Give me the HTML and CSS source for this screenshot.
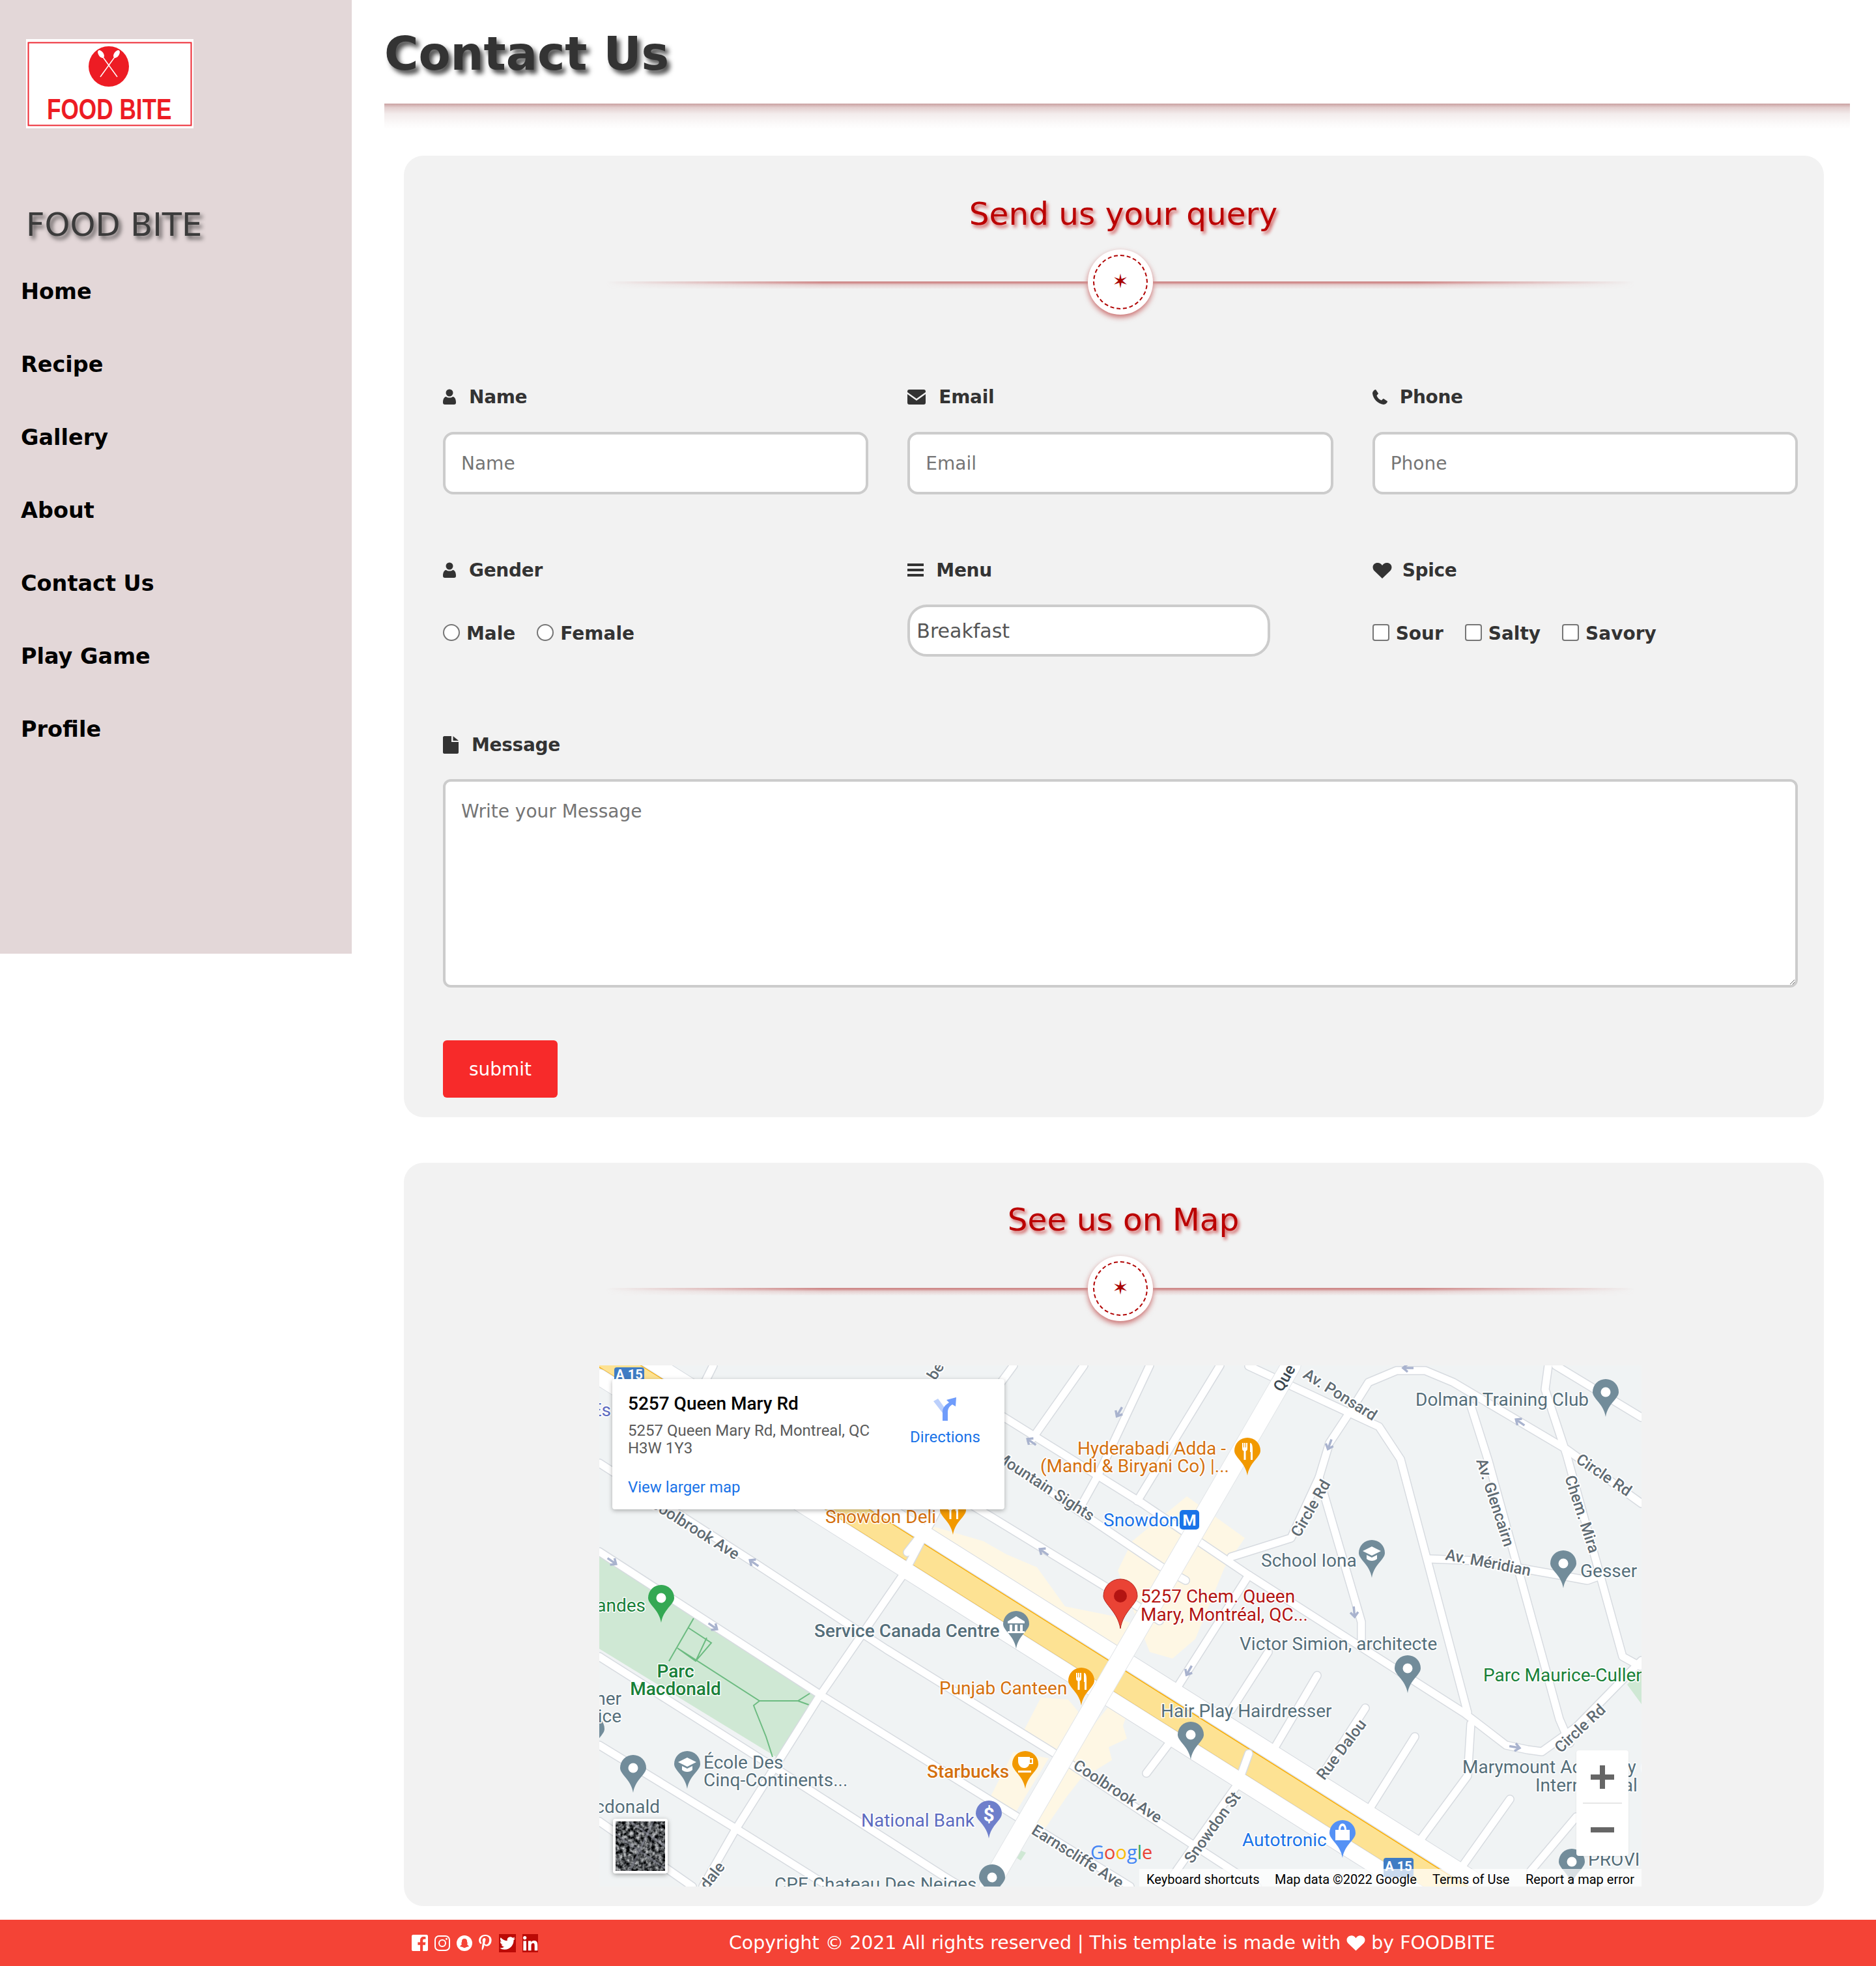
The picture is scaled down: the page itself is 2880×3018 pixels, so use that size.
FILE: index.html
```html
<!DOCTYPE html>
<html lang="en">
<head>
    <meta charset="UTF-8">
    <title>Contact Us</title>
    <link rel="stylesheet" href="styles.css">
</head>
<body>
    <div class="page">
        <aside class="sidebar">
            <div class="logo">
                <svg viewBox="0 0 257 137" width="257" height="137">
                    <rect x="3.500" y="5.500" width="250" height="127" fill="#fff" stroke="#ed2a35" stroke-width="2"/>
                    <circle cx="127" cy="42" r="31" fill="#ed1c24"/>
                    <g stroke="#fff" stroke-width="1.500" fill="#fff">
                        <path d="M114 58 L138 25"/>
                        <path d="M140 58 L116 25"/>
                        <ellipse cx="115" cy="23" rx="3" ry="6" transform="rotate(-35 115 23)"/>
                        <ellipse cx="139" cy="23" rx="3" ry="6" transform="rotate(35 139 23)"/>
                    </g>
                    <text class="logo-text" transform="translate(32 123) scale(0.8 1)">FOOD BITE</text>
                </svg>
            </div>
            <h2 class="brand">FOOD BITE</h2>
            <nav class="nav">
                <a href="#">Home</a>
                <a href="#">Recipe</a>
                <a href="#">Gallery</a>
                <a href="#">About</a>
                <a href="#">Contact Us</a>
                <a href="#">Play Game</a>
                <a href="#">Profile</a>
            </nav>
        </aside>

        <main class="content">
            <h1 class="page-title">Contact Us</h1>
            <div class="title-rule"></div>

            <section class="card card-form">
                <h2 class="card-title">Send us your query</h2>
                <div class="divider">
                    <span class="divider-line"></span>
                    <span class="divider-badge"><span class="divider-ring">&#10038;</span></span>
                    <span class="divider-line divider-line-right"></span>
                </div>

                <form class="query-form">
                    <div class="form-grid">
                        <div class="field">
                            <label class="field-label">
                                <svg class="icon icon-user" viewBox="0 0 20 24"><circle cx="10" cy="6" r="5.500"/><path d="M0 21 C0 14 3 12 5 12 C7 14 13 14 15 12 C17 12 20 14 20 21 C20 23 19 24 17 24 H3 C1 24 0 23 0 21Z"/></svg>
                                Name
                            </label>
                            <input type="text" placeholder="Name">
                        </div>
                        <div class="field">
                            <label class="field-label">
                                <svg class="icon icon-mail" viewBox="0 0 28 23"><path d="M3 0 H25 C27 0 28 1 28 3 V4 L14 14 L0 4 V3 C0 1 1 0 3 0Z"/><path d="M0 7 L14 17 L28 7 V20 C28 22 27 23 25 23 H3 C1 23 0 22 0 20Z"/></svg>
                                Email
                            </label>
                            <input type="text" placeholder="Email">
                        </div>
                        <div class="field">
                            <label class="field-label">
                                <svg class="icon icon-phone" viewBox="0 0 23 23"><path d="M5 0 L9 6 C9 7 7 8 6.500 9.500 C8 13 10 15 13.500 16.500 C15 16 16 14 17 14 L23 18 C23 20 20 23 17 23 C8 22 1 14 0 6 C0 3 3 0 5 0Z"/></svg>
                                Phone
                            </label>
                            <input type="text" placeholder="Phone">
                        </div>

                        <div class="field field-second">
                            <label class="field-label">
                                <svg class="icon icon-user" viewBox="0 0 20 24"><circle cx="10" cy="6" r="5.500"/><path d="M0 21 C0 14 3 12 5 12 C7 14 13 14 15 12 C17 12 20 14 20 21 C20 23 19 24 17 24 H3 C1 24 0 23 0 21Z"/></svg>
                                Gender
                            </label>
                            <div class="choices">
                                <label class="choice"><input type="radio" name="gender">Male</label>
                                <label class="choice"><input type="radio" name="gender">Female</label>
                            </div>
                        </div>
                        <div class="field field-second">
                            <label class="field-label">
                                <svg class="icon icon-bars" viewBox="0 0 25 20"><rect y="0" width="25" height="4"/><rect y="8" width="25" height="4"/><rect y="16" width="25" height="4"/></svg>
                                Menu
                            </label>
                            <select class="menu-select">
                                <option>Breakfast</option>
                                <option>Lunch</option>
                                <option>Dinner</option>
                            </select>
                        </div>
                        <div class="field field-second">
                            <label class="field-label">
                                <svg class="icon icon-heart" viewBox="0 0 30 25"><path d="M15 25 L2.500 13 C-1 9 0 2 7 1 C10 .500 13 2 15 5 C17 2 20 .500 23 1 C30 2 31 9 27.500 13Z"/></svg>
                                Spice
                            </label>
                            <div class="choices">
                                <label class="choice"><input type="checkbox">Sour</label>
                                <label class="choice"><input type="checkbox">Salty</label>
                                <label class="choice"><input type="checkbox">Savory</label>
                            </div>
                        </div>
                    </div>

                    <div class="field field-message">
                        <label class="field-label">
                            <svg class="icon icon-file" viewBox="0 0 24 27"><path d="M0 2 C0 1 1 0 2 0 H13 V9 H24 V25 C24 26 23 27 22 27 H2 C1 27 0 26 0 25Z"/><path d="M15.500 0 L24 7 H15.500Z"/></svg>
                            Message
                        </label>
                        <textarea placeholder="Write your Message"></textarea>
                    </div>

                    <button type="submit" class="submit-btn">submit</button>
                </form>
            </section>

            <section class="card card-map">
                <h2 class="card-title">See us on Map</h2>
                <div class="divider">
                    <span class="divider-line"></span>
                    <span class="divider-badge"><span class="divider-ring">&#10038;</span></span>
                    <span class="divider-line divider-line-right"></span>
                </div>

                <div class="map">
                    <svg class="map-canvas" viewBox="0 0 1600 800" width="1600" height="800">
                        <defs>
                            <g id="streets">
                                <path d="M0 150 L235 301 L441 436 L695 593 L830 683 L1010 800"/>
                                <path d="M0 286 L343 508 L630 686 L815 800"/>
                                <path d="M0 447 L273 620 L527 783 L555 800"/>
                                <path d="M0 583 L213 713 L352 800"/>
                                <path d="M0 700 L143 800"/>
                                <path d="M540 195 L830 372 L860 392"/>
                                <path d="M590 60 L834 212 L997 322 L1327 533 L1392 583 L1425 590 L1447 593 L1500 555 L1600 453"/>
                                <path d="M560 105 L861 308 L900 330"/>
                                <path d="M520 220 L468 319 L338 508 L207 716 L159 800"/>
                                <path d="M175 0 L160 30"/>
                                <path d="M636 0 L614 30"/>
                                <path d="M744 0 L663 115"/>
                                <path d="M845 0 L765 170 L740 215"/>
                                <path d="M953 0 L826 208"/>
                                <path d="M997 322 L883 501"/>
                                <path d="M1027 440 L970 529"/>
                                <path d="M840 626 L878 576"/>
                                <path d="M980 643 L888 773 L870 800"/>
                                <path d="M1105 636 L1176 526"/>
                                <path d="M1035 590 L1102 476"/>
                                <path d="M1181 683 L1252 570"/>
                                <path d="M1257 733 L1333 630 L1338 550"/>
                                <path d="M1322 773 L1398 666"/>
                                <path d="M1430 776 L1500 693"/>
                                <path d="M970 294 L1018 279 L1062 265 L1105 172 L1121 119 L1154 69 L1181 26 L1224 8 L1268 8 L1311 26 L1485 129 L1600 212"/>
                                <path d="M1105 172 L1170 394 L1170 420"/>
                                <path d="M997 1 L1197 94 L1230 144 L1333 533"/>
                                <path d="M1338 62 L1365 147 L1474 543 L1490 580"/>
                                <path d="M1457 0 L1452 37 L1485 137 L1571 447 L1598 462"/>
                                <path d="M1273 297 L1350 300 L1474 322 L1517 330 L1539 322"/>
                                <path d="M1468 0 L1600 80"/>
                                <path d="M997 596 L980 643"/>
                                <path d="M473 287 L510 240"/>
                            </g>
                            <g id="service">
                                <path d="M0 -56 L1340 788"/>
                                <path d="M0 18 L1300 837"/>
                            </g>
                            <path id="pin-big" d="M0 0 C-3 -20 -20 -28 -20 -38 A20 20 0 1 1 20 -38 C20 -28 3 -20 0 0Z"/>
                            <g id="pin-plain">
                                <use href="#pin-big"/>
                                <circle cy="-38" r="7.500" fill="#fff"/>
                            </g>
                            <g id="fork-icon" fill="#fff">
                                <path d="M-8 -50 v9 c0 2 1 3 2.500 3.500 V-24 h3 V-37.500 C-1 -38 0 -39 0 -41 v-9 h-2 v7 h-1 v-7 h-2 v7 h-1 v-7z"/>
                                <path d="M4 -50 C7 -50 8 -46 8 -40 v16 h-3 v-12 h-1z"/>
                            </g>
                            <g id="cap-icon" fill="#fff">
                                <path d="M0 -48 L14 -41 L0 -34 L-14 -41Z"/>
                                <path d="M-8 -35 L0 -31 L8 -35 V-29 C4 -25 -4 -25 -8 -29Z"/>
                            </g>
                            <path id="one-way" d="M-9 0 H6 M0 -6 L7 0 L0 6"/>
                        </defs>

                        <rect class="map-ground" width="1600" height="800"/>

                        <polygon class="map-cream" points="505,245 590,270 625,290 672,310 715,370 790,385 850,410 790,440 690,400 505,260"/>
                        <polygon class="map-cream" points="818,270 902,201 991,265 960,310 915,420 880,450 845,440 796,315"/>
                        <polygon class="map-cream" points="652,560 678,510 720,513 739,536 700,593"/>
                        <polygon class="map-cream" points="636,593 690,603 638,688 600,663"/>
                        <polygon class="map-cream" points="785,520 810,536 804,553 810,573 782,586 787,606 738,636 717,663 685,710 664,706 728,590"/>
                        <polygon class="map-park" points="0,290 340,510 278,605 0,435"/>
                        <polygon class="map-park" points="636,740 655,748 647,760 633,751"/>
                        <path class="map-park" d="M1600 465 L1578 490 L1600 520Z"/>
                        <g class="park-paths">
                            <path d="M145 388 L107 454 M137 403 L172 426 L148 454 L120 434 L246 515 H305 L324 503 M305 515 L330 524 M246 515 L237 522 L240 530 L256 570 L266 601 M165 418 L148 454"/>
                        </g>

                        <path class="highway-edge" d="M-40 -44 L1330 820"/>
                        <path class="highway" d="M-40 -44 L1330 820"/>

                        <use class="road-case service-case" href="#service"/>
                        <use class="road-case street-case" href="#streets"/>
                        <use class="road-fill service-fill" href="#service"/>
                        <use class="road-fill street-fill" href="#streets"/>
                        <path class="main-case" d="M1062 0 L598 800"/>
                        <path class="main-fill" d="M1062 0 L598 800"/>

                        <g class="arrows">
                            <use href="#one-way" transform="translate(20 301) rotate(35)"/>
                            <use href="#one-way" transform="translate(175 401) rotate(35)"/>
                            <use href="#one-way" transform="translate(237 303) rotate(215)"/>
                            <use href="#one-way" transform="translate(663 117) rotate(215)"/>
                            <use href="#one-way" transform="translate(682 286) rotate(215)"/>
                            <use href="#one-way" transform="translate(798 72) rotate(120)"/>
                            <use href="#one-way" transform="translate(1121 122) rotate(110)"/>
                            <use href="#one-way" transform="translate(1159 379) rotate(85)"/>
                            <use href="#one-way" transform="translate(1413 87) rotate(215)"/>
                            <use href="#one-way" transform="translate(1241 4) rotate(180)"/>
                            <use href="#one-way" transform="translate(905 469) rotate(120)"/>
                            <use href="#one-way" transform="translate(1406 586) rotate(10)"/>
                        </g>

                        <g class="road-names">
                            <text transform="translate(76 216) rotate(32)">Coolbrook Ave</text>
                            <text transform="translate(726 618) rotate(33)">Coolbrook Ave</text>
                            <text transform="translate(606 144) rotate(33)">Mountain Sights</text>
                            <text transform="translate(662 718) rotate(32)">Earnscliffe Ave</text>
                            <text transform="translate(1079 18) rotate(32)">Av. Ponsard</text>
                            <text transform="translate(1075 265) rotate(-60)">Circle Rd</text>
                            <text transform="translate(1498 148) rotate(34)">Circle Rd</text>
                            <text transform="translate(1476 596) rotate(-43)">Circle Rd</text>
                            <text transform="translate(1346 146) rotate(72)">Av. Glencairn</text>
                            <text transform="translate(1482 172) rotate(72)">Chem. Mira</text>
                            <text transform="translate(1298 298) rotate(11)">Av. Méridian</text>
                            <text transform="translate(1113 638) rotate(-53)">Rue Dalou</text>
                            <text transform="translate(910 766) rotate(-54)">Snowdon St</text>
                            <text transform="translate(166 806) rotate(-52)">dale</text>
                            <text transform="translate(516 24) rotate(-58)">be</text>
                            <text class="road-name-dark" transform="translate(1048 42) rotate(-60)">Que</text>
                        </g>

                        <g class="pin pin-grey">
                            <use href="#pin-plain" transform="translate(1545 79)"/>
                            <use href="#pin-plain" transform="translate(1480 342)"/>
                            <use href="#pin-plain" transform="translate(1241 503)"/>
                            <use href="#pin-plain" transform="translate(908 605)"/>
                            <use href="#pin-plain" transform="translate(52 656)"/>
                            <use href="#pin-plain" transform="translate(-12 596)"/>
                            <use href="#pin-plain" transform="translate(603 824)"/>
                            <use href="#pin-plain" transform="translate(1493 800)"/>
                            <g transform="translate(1186 326)"><use href="#pin-big"/><use href="#cap-icon"/></g>
                            <g transform="translate(135 650)"><use href="#pin-big"/><use href="#cap-icon"/></g>
                            <g transform="translate(640 435)">
                                <use href="#pin-big"/>
                                <path fill="#fff" d="M-13 -42 L0 -50 L13 -42 V-39 H-13Z M-10 -37 h4 v10 h-4z M-2 -37 h4 v10 h-4z M6 -37 h4 v10 h-4z M-13 -27 H13 V-24 H-13Z"/>
                            </g>
                        </g>
                        <g class="pin pin-orange">
                            <g transform="translate(995 169)"><use href="#pin-big"/><use href="#fork-icon"/></g>
                            <g transform="translate(543 260)"><use href="#pin-big"/><use href="#fork-icon"/></g>
                            <g transform="translate(740 522)"><use href="#pin-big"/><use href="#fork-icon"/></g>
                            <g transform="translate(654 650)">
                                <use href="#pin-big"/>
                                <path fill="#fff" d="M-11 -49 H7 V-47 H12 V-38 H6 C5 -34 2 -32 -2 -32 C-7 -32 -11 -37 -11 -42Z M7 -45 V-40 H10 V-45Z M-11 -28 H9 V-25 H-11Z"/>
                            </g>
                        </g>
                        <g class="pin pin-green">
                            <use href="#pin-plain" transform="translate(95 395)"/>
                        </g>
                        <g class="pin pin-indigo">
                            <g transform="translate(598 726)">
                                <use href="#pin-big"/>
                                <text class="pin-dollar" y="-26" text-anchor="middle">$</text>
                            </g>
                        </g>
                        <g class="pin pin-blue">
                            <g transform="translate(1141 756)">
                                <use href="#pin-big"/>
                                <path fill="#fff" d="M-11 -43 H-6 C-6 -56 6 -56 6 -43 H11 V-27 H-11Z M-3 -43 H3 C3 -51 -3 -51 -3 -43Z"/>
                            </g>
                        </g>
                        <g transform="translate(800 404)">
                            <path class="pin-main" d="M0 0 C-4 -26 -26 -38 -26 -50 A26 26 0 1 1 26 -50 C26 -38 4 -26 0 0Z"/>
                            <circle cy="-50" r="10" fill="#b31412"/>
                        </g>
                        <g transform="translate(891 222)">
                            <rect class="metro-box" width="30" height="30" rx="5"/>
                            <text class="metro-letter" x="15" y="24" text-anchor="middle">M</text>
                        </g>

                        <g class="labels label-slate">
                            <text x="1253" y="62">Dolman Training Club</text>
                            <text x="1016" y="309">School Iona</text>
                            <text x="1506" y="325">Gesser</text>
                            <text x="983" y="437">Victor Simion, architecte</text>
                            <text x="862" y="540">Hair Play Hairdresser</text>
                            <text x="1325" y="626">Marymount Academy (</text>
                            <text x="1437" y="654">International</text>
                            <text x="1518" y="768">PROVI</text>
                            <text x="269" y="806">CPE Chateau Des Neiges</text>
                            <text x="160" y="619">École Des</text>
                            <text x="160" y="646">Cinq-Continents...</text>
                            <text x="93" y="687" text-anchor="end">cdonald</text>
                            <text x="34" y="521" text-anchor="end">ner</text>
                            <text x="34" y="548" text-anchor="end">ice</text>
                            <text class="label-strong" x="330" y="417">Service Canada Centre</text>
                        </g>
                        <g class="labels label-orange">
                            <text x="962" y="137" text-anchor="end">Hyderabadi Adda -</text>
                            <text x="967" y="164" text-anchor="end">(Mandi &amp; Biryani Co) |...</text>
                            <text x="347" y="242">Snowdon Deli</text>
                            <text x="522" y="505">Punjab Canteen</text>
                            <text class="label-strong" x="503" y="633">Starbucks</text>
                        </g>
                        <g class="labels label-blue">
                            <text x="774" y="247">Snowdon</text>
                            <text x="987" y="738">Autotronic</text>
                        </g>
                        <g class="labels label-indigo">
                            <text x="402" y="708">National Bank</text>
                            <text x="18" y="78" text-anchor="end">Es</text>
                        </g>
                        <g class="labels label-red">
                            <text x="831" y="364">5257 Chem. Queen</text>
                            <text x="831" y="392">Mary, Montréal, QC...</text>
                        </g>
                        <g class="labels label-green">
                            <text x="1357" y="485">Parc Maurice-Cullen</text>
                            <text x="71" y="378" text-anchor="end">andes</text>
                            <text class="label-strong" x="117" y="479" text-anchor="middle">Parc</text>
                            <text class="label-strong" x="117" y="506" text-anchor="middle">Macdonald</text>
                        </g>

                        <text class="google-mark" x="754" y="758"><tspan fill="#4285f4">G</tspan><tspan fill="#ea4335">o</tspan><tspan fill="#fbbc05">o</tspan><tspan fill="#4285f4">g</tspan><tspan fill="#34a853">l</tspan><tspan fill="#ea4335">e</tspan></text>

                        <rect class="shield" x="23" y="3" width="46" height="30" rx="4"/>
                        <text class="shield-text" x="46" y="21" text-anchor="middle">A 15</text>
                        <rect class="shield" x="1204" y="756" width="46" height="30" rx="4"/>
                        <text class="shield-text" x="1227" y="776" text-anchor="middle">A 15</text>
                    </svg>

                    <div class="map-attrib">
                        <span class="attrib-keys">Keyboard shortcuts</span>
                        <span class="attrib-data">Map data ©2022 Google</span>
                        <span class="attrib-terms">Terms of Use</span>
                        <span class="attrib-report">Report a map error</span>
                    </div>

                    <div class="map-popup">
                        <div class="popup-text">
                            <div class="popup-title">5257 Queen Mary Rd</div>
                            <div class="popup-address">5257 Queen Mary Rd, Montreal, QC<br>H3W 1Y3</div>
                            <a class="popup-link" href="#">View larger map</a>
                        </div>
                        <a class="popup-directions" href="#">
                            <svg viewBox="0 0 36 36" width="36" height="36">
                                <path fill="#bcd0fc" d="M0 6 L7 2 L20 20 L20 30 L14 24Z"/>
                                <path fill="#6f9cfb" d="M14 36 V22 C14 16 18 12 24 8 L20 4 L35 0 L34 14 L29 11 C24 14 22 18 22 23 V36Z"/>
                            </svg>
                            <span>Directions</span>
                        </a>
                    </div>

                    <svg class="map-thumb" viewBox="0 0 76 76" width="84" height="84">
                        <filter id="sat-noise" color-interpolation-filters="sRGB">
                            <feTurbulence type="fractalNoise" baseFrequency="0.18" numOctaves="3" seed="4"/>
                            <feColorMatrix values="1.500 0 0 0 -0.420  1.500 0 0 0 -0.410  1.500 0 0 0 -0.400  0 0 0 0 1"/>
                        </filter>
                        <rect width="76" height="76" filter="url(#sat-noise)"/>
                        <g class="thumb-roads">
                            <path d="M0 20 L76 72"/>
                            <path d="M22 0 L76 38"/>
                            <path d="M58 0 L22 76"/>
                        </g>
                    </svg>

                    <div class="map-zoom">
                        <span class="zoom-plus"></span>
                        <span class="zoom-sep"></span>
                        <span class="zoom-minus"></span>
                    </div>
                </div>
            </section>
        </main>
    </div>

    <footer class="footer">
        <div class="socials">
            <svg class="social" viewBox="0 0 24 24" width="25" height="25"><path fill="#fff" fill-rule="evenodd" d="M2 0 H22 C23 0 24 1 24 2 V22 C24 23 23 24 22 24 H16.500 V15 H20 L20.500 11 H16.500 V8.500 C16.500 7.300 17 6.500 18.500 6.500 H20.600 V3 C20 3 18.800 2.800 17.500 2.800 C14.500 2.800 12.500 4.600 12.500 8 V11 H9 V15 H12.500 V24 H2 C1 24 0 23 0 22 V2 C0 1 1 0 2 0Z"/></svg>
            <svg class="social" viewBox="0 0 24 24" width="24" height="24"><g fill="none" stroke="#fff" stroke-width="2"><rect x="1" y="1" width="22" height="22" rx="6"/><circle cx="12" cy="12" r="5"/></g><circle cx="18.500" cy="5.500" r="1.400" fill="#fff"/></svg>
            <svg class="social" viewBox="0 0 24 24" width="24" height="24"><path fill="#fff" fill-rule="evenodd" d="M12 0 A12 12 0 1 1 12 24 A12 12 0 1 1 12 0Z M12 5 C9 5 8 7 8 9 V11 L6.500 11.500 L8 13 C7.500 15 6 16 4.800 16.500 C5.500 17.500 7 17 8 17.800 C9.500 18 10.500 19.300 12 19.300 C13.500 19.300 14.500 18 16 17.800 C17 17 18.500 17.500 19.200 16.500 C18 16 16.500 15 16 13 L17.500 11.500 L16 11 V9 C16 7 15 5 12 5Z"/></svg>
            <svg class="social social-pin" viewBox="0 0 24 24" width="25" height="25"><path fill="#fff" d="M12.500 0C6.200 0 3 4.200 3 8.200c0 2.400 1 4.600 2.900 5.400.3.100.6 0 .7-.4l.3-1.100c.1-.3 0-.5-.2-.8-.6-.7-.9-1.500-.9-2.800 0-3.500 2.600-6.600 6.800-6.600 3.700 0 5.800 2.300 5.800 5.300 0 4-1.800 7.400-4.400 7.400-1.500 0-2.600-1.200-2.200-2.700.4-1.800 1.200-3.700 1.200-5 0-1.100-.6-2.100-1.900-2.100-1.500 0-2.700 1.600-2.700 3.600 0 1.300.4 2.200.4 2.200L7.600 17.800c-.5 2.100-.1 4.700 0 5 0 .2.2.2.3.1.1-.2 1.800-2.200 2.400-4.200l.9-3.600c.5.900 1.800 1.700 3.300 1.700 4.300 0 7.200-3.900 7.200-9.200C21.700 3.700 18.300 0 12.500 0z"/></svg>
            <span class="social-tile"><svg viewBox="0 0 24 24" width="24" height="24"><path fill="#fff" d="M23.953 4.570a10 10 0 01-2.825.775 4.958 4.958 0 002.163-2.723c-.951.555-2.005.959-3.127 1.184a4.920 4.920 0 00-8.384 4.482C7.690 8.095 4.067 6.130 1.640 3.162a4.822 4.822 0 00-.666 2.475c0 1.710.870 3.213 2.188 4.096a4.904 4.904 0 01-2.228-.616v.060a4.923 4.923 0 003.946 4.827 4.996 4.996 0 01-2.212.085 4.936 4.936 0 004.604 3.417 9.867 9.867 0 01-6.102 2.105c-.390 0-.779-.023-1.170-.067a13.995 13.995 0 007.557 2.209c9.053 0 13.998-7.496 13.998-13.985 0-.210 0-.420-.015-.630A9.935 9.935 0 0024 4.590z"/></svg></span>
            <span class="social-tile social-tile-in"><svg viewBox="2.500 2.500 18.500 18.500" width="24" height="24"><path fill="#fff" d="M20.447 20.452h-3.554v-5.569c0-1.328-.027-3.037-1.852-3.037-1.853 0-2.136 1.445-2.136 2.939v5.667H9.351V9h3.414v1.561h.046c.477-.9 1.637-1.850 3.370-1.850 3.601 0 4.267 2.370 4.267 5.455v6.286zM5.337 7.433c-1.144 0-2.063-.926-2.063-2.065 0-1.138.920-2.063 2.063-2.063 1.140 0 2.064.925 2.064 2.063 0 1.139-.925 2.065-2.064 2.065zm1.782 13.019H3.555V9h3.564v11.452z"/></svg></span>
        </div>
        <p class="copyright">Copyright © 2021 All rights reserved | This template is made with <svg class="footer-heart" viewBox="0 0 30 25" width="29" height="25"><path fill="#fff" d="M15 25 L2.500 13 C-1 9 0 2 7 1 C10 .500 13 2 15 5 C17 2 20 .500 23 1 C30 2 31 9 27.500 13Z"/></svg> by FOODBITE</p>
    </footer>
</body>
</html>
```

FILE: styles.css
```css
/* General Styles */
* {
    box-sizing: border-box;
}

body {
    margin: 0;
    font-family: "DejaVu Sans", Verdana, sans-serif;
    background-color: #fff;
    color: #333;
}

.page {
    display: flex;
    align-items: flex-start;
}

/* Sidebar */
.sidebar {
    flex: 0 0 540px;
    height: 1464px;
    background-color: #e3d7d8;
    padding-top: 60px;
}

.logo {
    width: 257px;
    height: 137px;
    margin-left: 40px;
    background-color: #fff;
    display: flex;
}

.logo-text {
    font-family: "Liberation Sans", Arial, sans-serif;
    font-weight: bold;
    font-size: 44px;
    fill: #ed1c24;
}

.brand {
    margin: 119px 0 0 40px;
    font-size: 49.500px;
    font-weight: normal;
    line-height: 58px;
    color: #3b3b3b;
    text-shadow: 4px 5px 6px rgba(0, 0, 0, 0.6);
}

.nav {
    display: flex;
    flex-direction: column;
    margin: 38px 0 0 32px;
}

.nav a {
    height: 112px;
    line-height: 72px;
    font-size: 33.500px;
    font-weight: bold;
    color: #000;
    text-decoration: none;
}

/* Main column */
.content {
    flex: 1;
    min-width: 0;
    padding: 39px 40px 0 50px;
}

.page-title {
    margin: 0;
    font-size: 71.500px;
    line-height: 88px;
    color: #333;
    text-shadow: 5px 6px 7px rgba(0, 0, 0, 0.7);
}

.title-rule {
    height: 39px;
    margin-top: 32px;
    background: linear-gradient(#c9a0a0 0, #e3cfcf 6px, #f3ecec 16px, #fbf9f9 30px, #fff 39px);
}

.card {
    margin: 41px 0 0 30px;
    width: 2180px;
    padding: 60px 40px 0 60px;
    background-color: #f2f2f2;
    border-radius: 30px;
}

.card-form {
    height: 1476px;
}

.card-map {
    height: 1141px;
    margin-top: 70px;
    padding-top: 58px;
}

.card-title {
    margin: 0;
    padding-left: 9px;
    font-size: 48.500px;
    font-weight: normal;
    line-height: 58px;
    text-align: center;
    color: #bb0000;
    text-shadow: 3px 4px 5px rgba(187, 0, 0, 0.6);
}

/* Title divider */
.divider {
    display: flex;
    align-items: center;
    justify-content: center;
    width: 1580px;
    margin: 26px auto 0;
}

.card-map .divider {
    margin-top: 27px;
}

.divider-line {
    flex: 1;
    height: 14px;
    margin-top: 12px;
    background: linear-gradient(#cf8a8a 0, #cf8a8a 2px, rgba(207, 138, 138, 0.35) 5px, rgba(207, 138, 138, 0) 12px);
    -webkit-mask-image: linear-gradient(to right, transparent, #000 45%);
    mask-image: linear-gradient(to right, transparent, #000 45%);
}

.divider-line-right {
    -webkit-mask-image: linear-gradient(to left, transparent, #000 45%);
    mask-image: linear-gradient(to left, transparent, #000 45%);
}

.divider-badge {
    flex: 0 0 100px;
    height: 100px;
    border-radius: 50%;
    background-color: #fff;
    box-shadow: 0 4px 8px rgba(170, 0, 0, 0.55);
    display: flex;
    align-items: center;
    justify-content: center;
}

.divider-ring {
    width: 84px;
    height: 84px;
    border: 2px dashed #b00000;
    border-radius: 50%;
    color: #a80000;
    font-size: 30px;
    line-height: 78px;
    text-align: center;
}

/* Form */
.query-form {
    margin-top: 109px;
}

.form-grid {
    display: grid;
    grid-template-columns: repeat(3, 653.33px);
    column-gap: 60px;
}

.field-label {
    display: flex;
    align-items: center;
    gap: 20px;
    height: 34px;
    font-size: 28px;
    font-weight: bold;
    letter-spacing: -0.3px;
    color: #333;
}

.icon {
    fill: #333;
    flex: none;
}

.icon-user {
    width: 20px;
    height: 24px;
}

.icon-mail {
    width: 28px;
    height: 23px;
}

.icon-phone {
    width: 23px;
    height: 23px;
    margin-right: -1px;
}

.icon-bars {
    width: 25px;
    height: 20px;
    margin-right: -1px;
}

.icon-heart {
    width: 30px;
    height: 25px;
    margin-right: -4px;
}

.icon-file {
    width: 24px;
    height: 27px;
}

.field input[type="text"] {
    display: block;
    width: 100%;
    height: 96px;
    margin-top: 37px;
    padding: 0 24px;
    border: 4px solid #ccc;
    border-radius: 16px;
    background-color: #fff;
    font-family: inherit;
    font-size: 28px;
}

.field-second {
    margin-top: 99px;
}

.choices {
    display: flex;
    gap: 33px;
    margin-top: 61px;
    height: 40px;
    align-items: center;
}

.choice {
    display: flex;
    align-items: center;
    font-size: 28px;
    font-weight: bold;
    color: #333;
    line-height: 34px;
}

.choice input {
    width: 26px;
    height: 26px;
    margin: -5px 10px 0 0;
    border: 2px solid #767676;
    background-color: #fff;
    -webkit-appearance: none;
    appearance: none;
}

.choice input[type="radio"] {
    border-radius: 50%;
}

.choice input[type="checkbox"] {
    border-radius: 4px;
}

.menu-select {
    display: block;
    width: 557px;
    height: 80px;
    margin-top: 36px;
    padding: 0 10px;
    border: 4px solid #ccc;
    border-radius: 30px;
    background-color: #fff;
    font-family: inherit;
    font-size: 30px;
    color: #555;
    -webkit-appearance: none;
    appearance: none;
}

.field-message {
    margin-top: 118px;
}

.field-message textarea {
    display: block;
    width: 2080px;
    height: 320px;
    margin-top: 36px;
    padding: 29px 24px 24px;
    border: 4px solid #ccc;
    border-radius: 12px;
    background-color: #fff;
    font-family: inherit;
    font-size: 28px;
    line-height: 1.2;
}

.submit-btn {
    display: block;
    width: 176px;
    height: 88px;
    margin-top: 81px;
    border: none;
    border-radius: 6px;
    background-color: #f72a2a;
    color: #fff;
    font-family: inherit;
    font-size: 28px;
}

/* Map */
.map {
    position: relative;
    width: 1600px;
    height: 800px;
    margin: 68px auto 0;
    overflow: hidden;
    font-family: Roboto, sans-serif;
}

.map-canvas {
    display: block;
}

.map-ground {
    fill: #f0f3f4;
}

.map-cream {
    fill: #fef7e4;
}

.map-park {
    fill: #cfe8d4;
}

.park-paths {
    fill: none;
    stroke: #6cbb81;
    stroke-width: 2;
}

.highway-edge {
    fill: none;
    stroke: #f9ab00;
    stroke-width: 38;
}

.highway {
    fill: none;
    stroke: #fde293;
    stroke-width: 35;
}

.road-case,
.road-fill,
.main-case,
.main-fill {
    fill: none;
    stroke-linecap: round;
    stroke-linejoin: round;
}

.road-case {
    stroke: #d7dbe0;
}

.road-fill,
.main-fill {
    stroke: #fff;
}

.service-case {
    stroke-width: 26;
}

.service-fill {
    stroke-width: 24;
}

.street-case {
    stroke-width: 14;
}

.street-fill {
    stroke-width: 11;
}

.main-case {
    stroke: #e2e5e8;
    stroke-width: 31;
}

.main-fill {
    stroke-width: 29;
}

.arrows {
    fill: none;
    stroke: #a9b3ce;
    stroke-width: 3.500;
}

.road-names text {
    font-size: 24px;
    font-weight: 500;
    fill: #5f6b73;
    paint-order: stroke;
    stroke: #fff;
    stroke-width: 4px;
    stroke-linejoin: round;
}

.road-names .road-name-dark {
    fill: #3c4850;
}

.pin-grey {
    fill: #728c9a;
}

.pin-orange {
    fill: #f29900;
}

.pin-green {
    fill: #34a853;
}

.pin-indigo {
    fill: #6e7fcb;
}

.pin-blue {
    fill: #5491f5;
}

.pin-main {
    fill: #ea4335;
    stroke: #b3261e;
    stroke-width: 1;
}

.pin-dollar {
    font-size: 30px;
    font-weight: bold;
    fill: #fff;
}

.metro-box {
    fill: #1a73e8;
}

.metro-letter {
    font-size: 24px;
    font-weight: bold;
    fill: #fff;
}

.labels text {
    font-size: 28px;
    paint-order: stroke;
    stroke: #fff;
    stroke-width: 3px;
    stroke-linejoin: round;
}

.labels .label-strong {
    font-weight: 500;
}

.label-slate {
    fill: #546e7a;
}

.label-orange {
    fill: #d4700e;
}

.label-blue {
    fill: #1a73e8;
}

.label-indigo {
    fill: #5c6bc0;
}

.label-red {
    fill: #b31412;
}

.label-green {
    fill: #188038;
}

.google-mark {
    font-family: "Open Sans", sans-serif;
    font-size: 29px;
}

.shield {
    fill: #3f7cc4;
}

.shield-text {
    font-size: 20px;
    font-weight: bold;
    fill: #fff;
}

.map-attrib {
    position: absolute;
    left: 829px;
    right: 0;
    bottom: 0;
    height: 27px;
    background-color: rgba(255, 255, 255, 0.72);
    font-size: 20px;
    line-height: 27px;
    color: #000;
}

.map-attrib span {
    position: absolute;
    top: 3px;
    white-space: nowrap;
}

.attrib-keys {
    left: 11px;
}

.attrib-data {
    left: 208px;
}

.attrib-terms {
    left: 450px;
}

.attrib-report {
    left: 593px;
}

.map-popup {
    position: absolute;
    left: 20px;
    top: 21px;
    width: 602px;
    height: 200px;
    padding: 0 0 0 24px;
    background-color: #fff;
    border-radius: 4px;
    box-shadow: 0 2px 7px rgba(0, 0, 0, 0.3);
    display: flex;
}

.popup-text {
    flex: 0 0 414px;
    padding-top: 21px;
}

.popup-title {
    font-size: 28px;
    font-weight: 500;
    line-height: 34px;
    color: #000;
}

.popup-address {
    margin-top: 11px;
    font-size: 24px;
    line-height: 27px;
    color: #5b5b5b;
}

.popup-link {
    display: block;
    margin-top: 31px;
    font-size: 24px;
    line-height: 30px;
    color: #1a73e8;
    text-decoration: none;
}

.popup-directions {
    display: flex;
    flex-direction: column;
    align-items: center;
    width: 146px;
    padding-top: 28px;
    font-size: 24px;
    line-height: 30px;
    color: #1a73e8;
    text-decoration: none;
}

.popup-directions span {
    margin-top: 10px;
}

.map-thumb {
    position: absolute;
    left: 21px;
    top: 696px;
    border: 4px solid #fff;
    border-radius: 4px;
    box-shadow: 0 2px 7px rgba(0, 0, 0, 0.35);
}

.thumb-roads {
    fill: none;
    stroke: #8f929e;
    stroke-width: 3;
    stroke-opacity: 0.55;
}

.map-zoom {
    position: absolute;
    left: 1500px;
    top: 591px;
    width: 80px;
    height: 162px;
    background-color: #fff;
    border-radius: 4px;
    box-shadow: 0 1px 3px rgba(0, 0, 0, 0.08);
}

.zoom-plus,
.zoom-plus::after,
.zoom-minus {
    position: absolute;
    background-color: #666;
}

.zoom-plus {
    left: 22px;
    top: 37px;
    width: 36px;
    height: 8px;
}

.zoom-plus::after {
    content: "";
    left: 14px;
    top: -14px;
    width: 8px;
    height: 36px;
}

.zoom-sep {
    position: absolute;
    left: 10px;
    right: 10px;
    top: 80px;
    height: 2px;
    background-color: #e6e6e6;
}

.zoom-minus {
    left: 22px;
    top: 118px;
    width: 36px;
    height: 8px;
}

/* Footer */
.footer {
    height: 71px;
    margin-top: 21px;
    padding-left: 632px;
    background-color: #f44336;
    color: #fff;
    display: flex;
    align-items: center;
}

.socials {
    display: flex;
    align-items: center;
    gap: 10px;
    width: 487px;
}

.social-pin {
    margin: 0 -1px 0 -3px;
}

.social-tile {
    width: 26px;
    height: 28px;
    background-color: #bb0a06;
    display: flex;
    align-items: center;
    justify-content: center;
}

.social-tile-in {
    width: 24px;
}

.copyright {
    margin: 0;
    font-size: 28.400px;
    white-space: nowrap;
}

.footer-heart {
    vertical-align: -3px;
}
```
